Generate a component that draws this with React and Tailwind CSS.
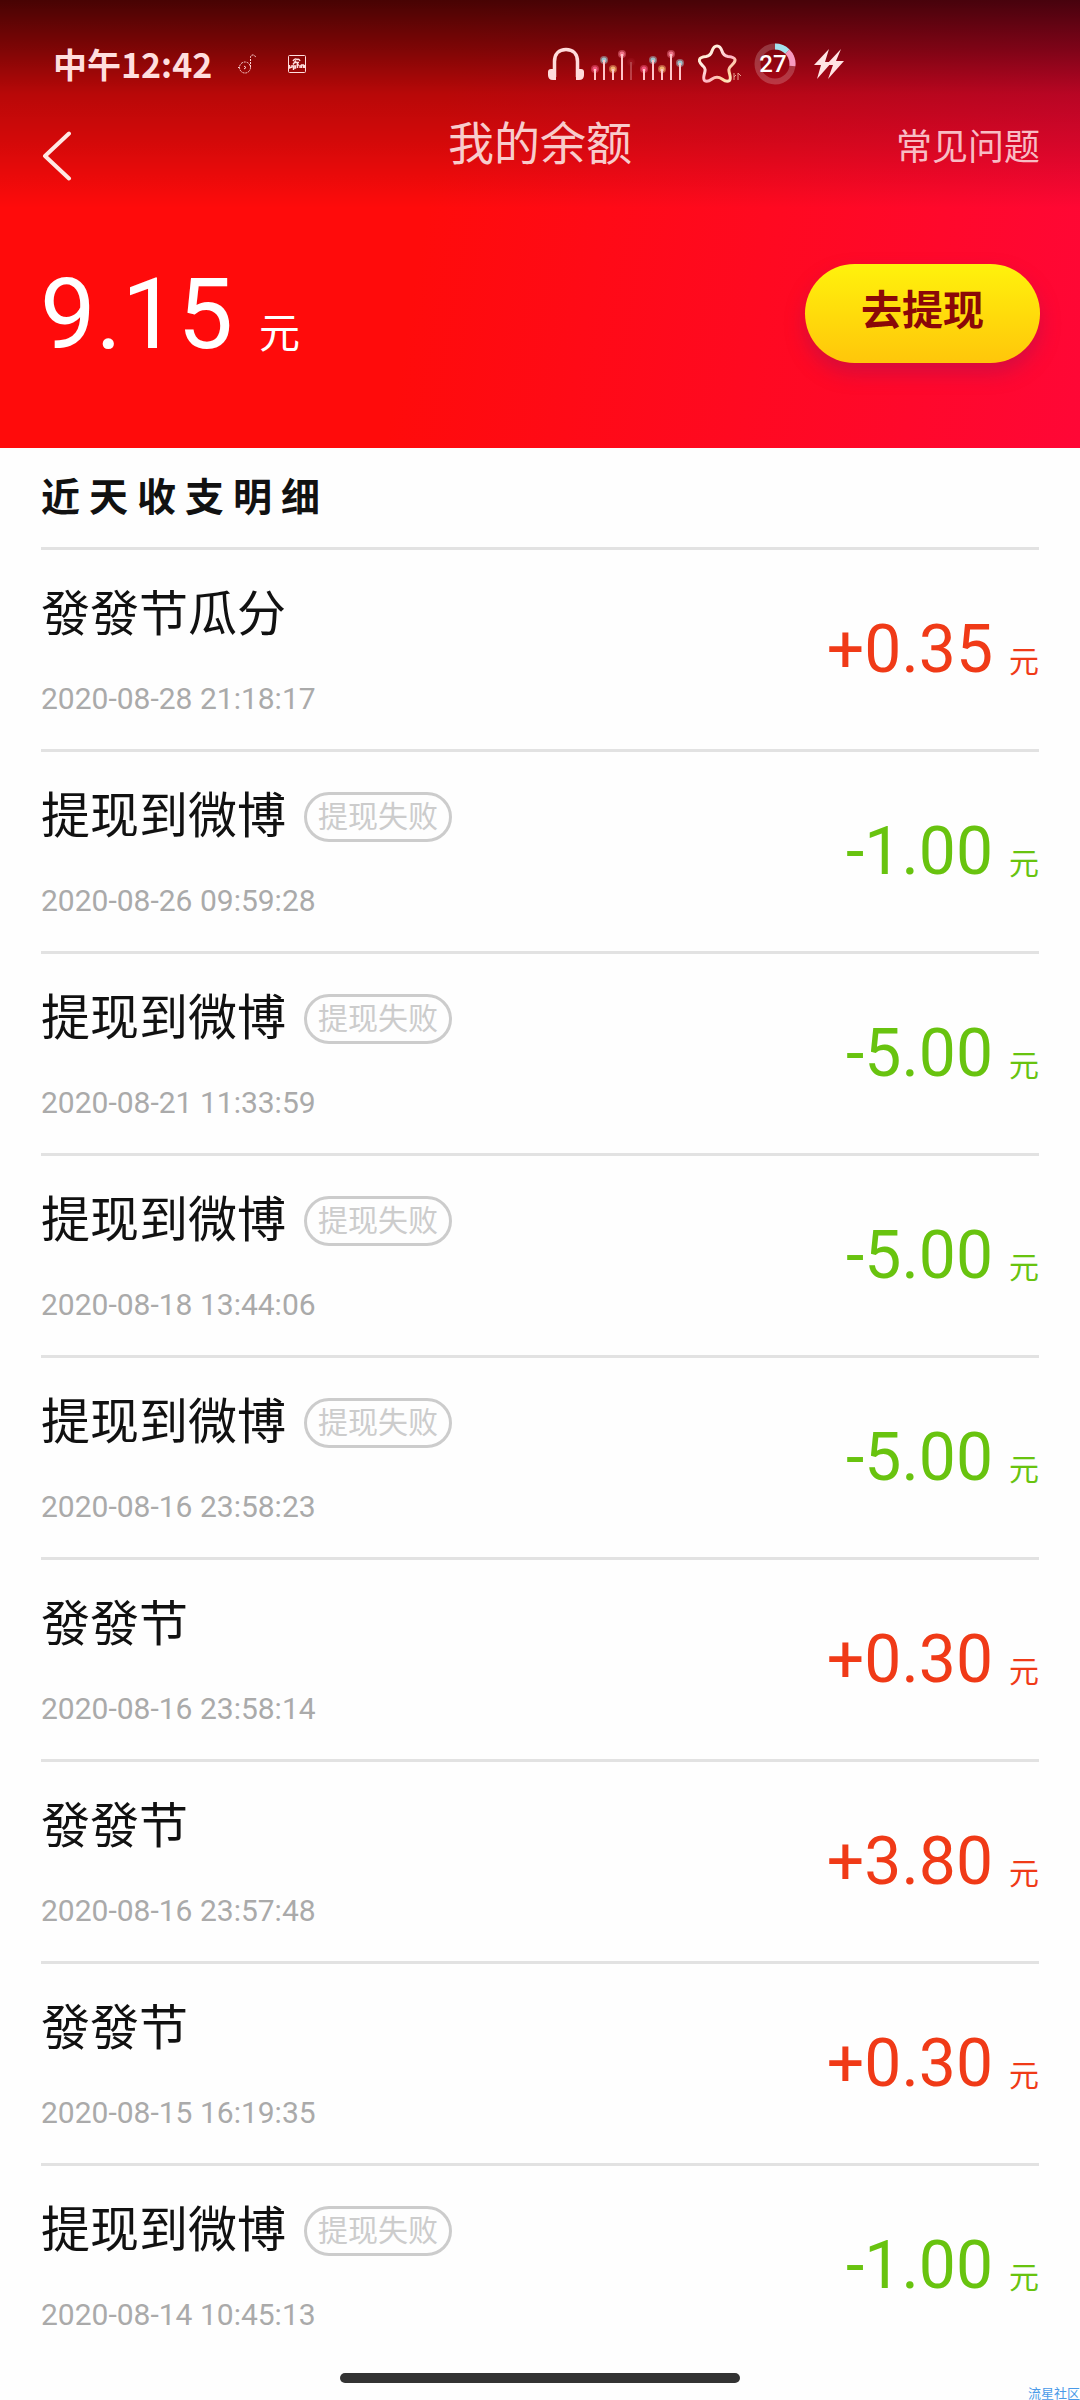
import React from 'react';

const records = [
  { title: '發發节瓜分', time: '2020-08-28 21:18:17', amount: '+0.35' },
  { title: '提现到微博', time: '2020-08-26 09:59:28', amount: '-1.00', failed: true },
  { title: '提现到微博', time: '2020-08-21 11:33:59', amount: '-5.00', failed: true },
  { title: '提现到微博', time: '2020-08-18 13:44:06', amount: '-5.00', failed: true },
  { title: '提现到微博', time: '2020-08-16 23:58:23', amount: '-5.00', failed: true },
  { title: '發發节', time: '2020-08-16 23:58:14', amount: '+0.30' },
  { title: '發發节', time: '2020-08-16 23:57:48', amount: '+3.80' },
  { title: '發發节', time: '2020-08-15 16:19:35', amount: '+0.30' },
  { title: '提现到微博', time: '2020-08-14 10:45:13', amount: '-1.00', failed: true },
];

const NoteIcon = () => (
  <svg width="18" height="20" viewBox="0 0 18 20" fill="none" stroke="#ffd9d9" strokeDasharray="2 1">
    <circle cx="7" cy="13.5" r="5.5" />
    <path d="M12.5 13V3.5Q12.5 1 15 1Q17.5 1 17.5 4" />
    <path d="M6 12l2 1.5-2 1.5M0 13.5h1.5" strokeDasharray="none" />
  </svg>
);

const AppIcon = () => (
  <svg width="18" height="18" viewBox="0 0 18 18" fill="none" stroke="#ffdede">
    <rect x="0.5" y="0.5" width="17" height="17" rx="1" />
    <path
      d="M5 6Q7 3 9 4.5Q11 3.5 12 6M6 7.5h5M8 5.5l-3 4M1.5 10v3l2.5-1v-2M5.5 15v-4h2v2h-2M9.5 8v5M8.5 10h2.5M12 13v-3M13.5 13v-3h2v3M16.5 10v3"
      strokeWidth="1.4"
    />
  </svg>
);

const HeadphonesIcon = () => (
  <svg width="36" height="34" viewBox="0 0 36 34" fill="none">
    <path d="M6.5 30V14.5C6.5 7 11 2.5 18 2.5S29.5 7 29.5 14.5V30" stroke="#ffdcdc" strokeWidth="3.5" />
    <path d="M3 22h5v11H5Q0 33 0 28V25Q0 22 3 22Z" fill="#ffdcdc" />
    <path d="M33 22h-5v11h3Q36 33 36 28V25Q36 22 33 22Z" fill="#ffdcdc" />
  </svg>
);

const signalBars = [
  { x: 5, top: 19, color: '#f0567a' },
  { x: 14, top: 10, color: '#9fc4cc' },
  { x: 23, top: 19, color: '#efb070' },
  { x: 32, top: 4, color: '#f0768a' },
  { x: 41, top: 12, color: '#c03040', dim: true },
  { x: 54, top: 19, color: '#f0567a' },
  { x: 63, top: 10, color: '#9fc4cc' },
  { x: 72, top: 19, color: '#efb070' },
  { x: 81, top: 4, color: '#f0768a' },
  { x: 90, top: 13, color: '#9fc4cc' },
];

const SignalIcon = () => (
  <svg width="96" height="34" viewBox="0 -3 96 34">
    {signalBars.map((bar) => (
      <g key={bar.x} opacity={bar.dim ? 0.3 : 1}>
        <circle cx={bar.x} cy={bar.top} r="4" fill={bar.color} opacity="0.5" />
        <circle cx={bar.x} cy={bar.top} r="2.5" fill={bar.color} />
        <path d={`M${bar.x} ${bar.top}V30`} stroke="#ffc4c8" strokeWidth="2" />
      </g>
    ))}
  </svg>
);

const StarIcon = () => (
  <svg width="44" height="40" viewBox="0 0 44 40" fill="none">
    <defs>
      <linearGradient id="star" x1="0" y1="0" x2="1" y2="1">
        <stop offset="0" stopColor="#ffe0b0" />
        <stop offset="0.3" stopColor="#fff0e4" />
        <stop offset="0.6" stopColor="#ffb4c4" />
        <stop offset="0.8" stopColor="#ffd9a0" />
        <stop offset="1" stopColor="#fff0dc" />
      </linearGradient>
    </defs>
    <path
      d="M19 2C21.500 2 23 4 24 7C25 10.500 26.500 12 30 12.500C34.500 13 36.500 13.500 37 15.500C37.500 18 35 20 33 22C30.500 24.500 30.500 26 31.500 29.500C32.500 33.500 33 35 31.500 36.500C29 38.500 26 36.500 24 35C20.500 32.500 17.500 32.500 14 35C12 36.500 9 38.500 6.500 36.500C5 35 5.500 33.500 6.500 29.500C7.500 26 7.500 24.500 5 22C3 20 0.500 18 1.500 15.500C2 13.500 3.500 13 8 12.500C11.500 12 13 10.500 14 7C15 4 16.500 2 19 2Z"
      stroke="url(#star)"
      strokeWidth="3"
      strokeLinejoin="round"
    />
    <path d="M36 29v7M36 33l2-2M40 36v-7l3 3" stroke="#e8a090" />
  </svg>
);

const BatteryRing = ({ level }) => (
  <div className="relative flex size-[42px] items-center justify-center pr-1">
    <svg className="absolute inset-0" width="42" height="42" viewBox="0 0 42 42" fill="none" strokeWidth="6">
      <circle cx="21" cy="21" r="17.5" stroke="#fff" strokeOpacity="0.2" />
      <path d="M21 3.5A17.5 17.5 0 0 1 33.4 8.6" stroke="#a4e2ee" />
      <path d="M33.4 8.6A17.5 17.5 0 0 1 38.4 23" stroke="#f79ac0" />
    </svg>
    <span className="relative text-[24px] leading-6 font-medium text-white">{level}</span>
  </div>
);

const ChargingIcon = () => (
  <svg width="30" height="32" viewBox="0 0 30 32" fill="#ffe4e4">
    <path d="M15 1L0 17h7L3 31 18 14h-7z" />
    <path d="M27 1L12 17h7L14 31 30 13h-8z" />
  </svg>
);

const StatusBar = () => (
  <div className="grid h-24 grid-cols-2 items-center pt-8">
    <div className="flex items-center pl-[53px]">
      <span className="font-['Noto_Sans_CJK_SC',sans-serif] text-[34px] leading-10 font-bold text-[#ffdede]">
        中午12:42
      </span>
      <div className="flex items-center gap-8 pl-[26px]">
        <NoteIcon />
        <AppIcon />
      </div>
    </div>
    <div className="flex items-center pl-2">
      <HeadphonesIcon />
      <div className="flex items-center gap-3 pl-1.5">
        <SignalIcon />
        <StarIcon />
        <BatteryRing level={27} />
      </div>
      <div className="pl-[18px]">
        <ChargingIcon />
      </div>
    </div>
  </div>
);

const RecordRow = ({ record }) => {
  const income = record.amount.startsWith('+');

  return (
    <li className="flex justify-between border-b-3 border-[#e2e2e2] last:border-b-0">
      <div className="pt-[33px] pb-[30px]">
        <div className="flex items-center gap-[18px]">
          <h3 className="text-[49px] leading-[64px] text-[#111]">{record.title}</h3>
          {record.failed && (
            <span className="rounded-full border-3 border-[#ccc] px-[11px] text-[30px] leading-[44px] text-[#ccc]">
              提现失败
            </span>
          )}
        </div>
        <p className="mt-8 text-[30px] leading-10 text-[#aaa]">{record.time}</p>
      </div>
      <p className={`flex items-baseline gap-4 pt-16 ${income ? 'text-[#f03a17]' : 'text-[#68c30f]'}`}>
        <span className="text-[66px] leading-[72px]">{record.amount}</span>
        <span className="text-[30px] leading-10">元</span>
      </p>
    </li>
  );
};

const App = () => {
  return (
    <div className="relative min-h-screen bg-[#fefefe] font-[Roboto,'Noto_Sans_CJK_SC',sans-serif]">
      <header className="bg-[linear-gradient(180deg,rgba(0,0,0,0.72)_0,rgba(0,0,0,0.5)_50px,rgba(0,0,0,0.28)_94px,rgba(0,0,0,0.16)_146px,rgba(0,0,0,0)_208px),linear-gradient(100deg,#ff0b0b_40%,#ff0736_100%)]">
        <StatusBar />

        <nav className="grid h-24 grid-cols-3 items-center px-10">
          <button type="button" aria-label="返回" className="justify-self-start pt-6">
            <svg
              width="34"
              height="50"
              viewBox="0 0 34 50"
              fill="none"
              stroke="#ffe8e4"
              strokeWidth="4"
              strokeLinecap="round"
              strokeLinejoin="round"
            >
              <path d="M29 2.5L5 25L29 47.5" />
            </svg>
          </button>
          <h1 className="text-center text-[46px] leading-[56px] text-[#f8cccc]">我的余额</h1>
          <a href="#faq" className="justify-self-end pt-2 text-[36px] leading-[48px] text-[#f8bcc4]">
            常见问题
          </a>
        </nav>

        <div className="flex items-center justify-between px-10 pt-[72px] pb-[85px]">
          <p className="flex items-baseline gap-[26px] text-white">
            <span className="text-[99px] leading-[94px]">9.15</span>
            <span className="text-[41px] leading-12">元</span>
          </p>
          <button
            type="button"
            className="rounded-full bg-linear-to-b from-[#fff20c] to-[#ffc60a] px-14 pt-[22px] pb-[26px] text-[41px] leading-[51px] font-bold text-[#8a0808] shadow-[0_10px_20px_rgba(150,20,90,0.4)]"
          >
            去提现
          </button>
        </div>
      </header>

      <main className="px-[41px]">
        <h2 className="border-b-3 border-[#e2e2e2] pt-0.5 text-[39px] leading-[97px] font-bold tracking-[9px] text-[#111]">
          近天收支明细
        </h2>
        <ul>
          {records.map((record) => (
            <RecordRow key={record.time} record={record} />
          ))}
        </ul>
      </main>

      <footer className="flex justify-center pt-2 pb-[17px]">
        <div className="h-[10px] w-[37%] rounded-full bg-[#333]" />
      </footer>
      <span className="absolute right-0 bottom-0 text-[13px] leading-3 text-[#4a9ae8]">流星社区</span>
    </div>
  );
};

export default App;
